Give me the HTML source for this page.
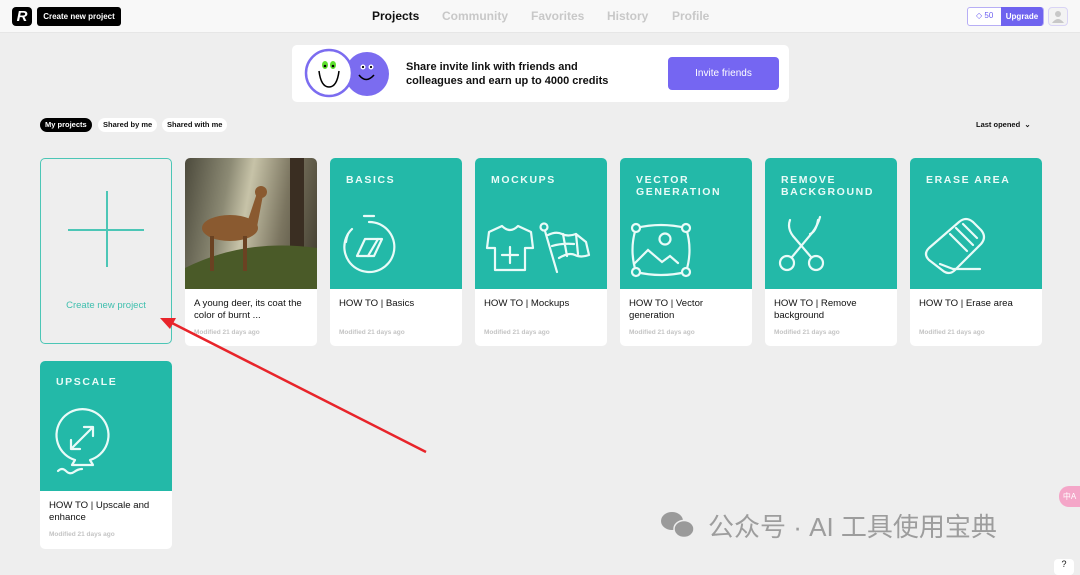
<!DOCTYPE html>
<html><head><meta charset="utf-8"><style>
*{box-sizing:border-box;margin:0;padding:0}
body{width:1080px;height:572px;background:#eeeeee;font-family:"Liberation Sans",Arial,sans-serif;position:relative;overflow:hidden;color:#111}
.hdr{position:absolute;left:0;top:0;width:1080px;height:33px;background:#f8f8f8;border-bottom:1px solid #e6e6e6}
.logo{position:absolute;left:12px;top:7px;width:20px;height:19px;background:#000;border-radius:4px;color:#fff;font-weight:bold;font-size:15px;line-height:19px;text-align:center;font-style:italic}
.cnp{position:absolute;left:37px;top:7px;width:84px;height:19px;background:#000;border-radius:3px;color:#fff;font-size:8px;font-weight:bold;line-height:19px;text-align:center}
.nav{position:absolute;top:9px;font-size:12px;font-weight:bold;color:#c8c8c8}
.cred{position:absolute;left:967px;top:7px;width:77px;height:19px;border:1px solid #b7aef5;border-radius:3px;background:#fff}
.cred span{position:absolute;left:8px;top:3px;font-size:8px;color:#6b5ef0}
.upg{position:absolute;right:0;top:-1px;width:42px;height:19px;background:#6f63ef;border-radius:0 3px 3px 0;color:#fff;font-size:8px;font-weight:bold;line-height:19px;text-align:center}
.av{position:absolute;left:1048px;top:7px;width:20px;height:19px;border:1px solid #d9d4f5;border-radius:4px;background:#f3f3f3}
.ban{position:absolute;left:292px;top:45px;width:497px;height:57px;background:#fff;border-radius:5px}
.ban p{position:absolute;left:114px;top:15px;font-size:11px;font-weight:bold;line-height:14px;color:#111}
.inv{position:absolute;left:376px;top:12px;width:111px;height:33px;background:#7566f2;border-radius:4px;color:#fff;font-size:10px;line-height:33px;text-align:center}
.tab{position:absolute;top:118px;height:14px;border-radius:7px;font-size:7.5px;font-weight:bold;line-height:14px;padding:0 5px;background:#fff}
.card{position:absolute;width:132px;background:#fff;border-radius:5px;overflow:hidden}
.top{height:131px;background:#23b9a8;position:relative}
.top h3{position:absolute;left:16px;top:16px;color:#e9fbf8;font-size:10.5px;letter-spacing:1.6px;line-height:12px;font-weight:bold}
.top svg{position:absolute;left:0;top:0}
.ct{padding:9px 9px 0;font-size:9.6px;line-height:11.5px;height:40px;color:#111}
.md{padding:0 9px;font-size:6.5px;color:#c4c4c4;font-weight:bold}
</style></head><body>
<div class="hdr">
<div class="logo">R</div><div class="cnp">Create new project</div>
<div class="nav" style="left:372px;color:#111">Projects</div>
<div class="nav" style="left:442px">Community</div>
<div class="nav" style="left:531px">Favorites</div>
<div class="nav" style="left:607px">History</div>
<div class="nav" style="left:672px">Profile</div>
<div class="cred"><span>◇ 50</span><div class="upg">Upgrade</div></div>
<div class="av"><svg width="18" height="17"><circle cx="9" cy="6" r="3" fill="#c8c8c8"/><path d="M3 15q6-8 12 0z" fill="#c8c8c8"/></svg></div>
</div>
<div class="ban">
<svg width="100" height="57" style="position:absolute;left:10px;top:0">
<circle cx="65" cy="29" r="22" fill="#7b6cf0"/>
<circle cx="27" cy="28" r="23" fill="#fff" stroke="#7b6cf0" stroke-width="2.5"/>
<ellipse cx="23" cy="20" rx="3" ry="4" fill="#5de02d"/><ellipse cx="31" cy="20" rx="3" ry="4" fill="#5de02d"/>
<circle cx="23" cy="21" r="1.3" fill="#000"/><circle cx="31" cy="21" r="1.3" fill="#000"/>
<path d="M17 26q2 16 10 16t10-16" fill="none" stroke="#000" stroke-width="1.5"/>
<circle cx="61" cy="22" r="2.5" fill="#fff"/><circle cx="69" cy="22" r="2.5" fill="#fff"/>
<circle cx="61" cy="22" r="1.1" fill="#000"/><circle cx="69" cy="22" r="1.1" fill="#000"/>
<path d="M57 30q7 9 15 0" fill="none" stroke="#000" stroke-width="1.5"/>
</svg>
<p>Share invite link with friends and<br>colleagues and earn up to 4000 credits</p>
<div class="inv">Invite friends</div>
</div>
<div class="tab" style="left:40px;background:#000;color:#fff">My projects</div>
<div class="tab" style="left:98px">Shared by me</div>
<div class="tab" style="left:162px">Shared with me</div>
<div style="position:absolute;left:976px;top:120px;font-size:7.5px;font-weight:bold">Last opened &nbsp;⌄</div>

<div style="position:absolute;left:40px;top:158px;width:132px;height:186px;border:1.5px solid #4cc6b6;border-radius:5px">
<div style="position:absolute;left:65px;top:32px;width:1.5px;height:76px;background:#4cc6b6"></div>
<div style="position:absolute;left:27px;top:70px;width:76px;height:1.5px;background:#4cc6b6"></div>
<div style="position:absolute;left:0;width:100%;top:141px;text-align:center;color:#3fbfae;font-size:9.5px">Create new project</div>
</div>

<div class="card" style="left:185px;top:158px;height:188px">
<div class="top" style="background:linear-gradient(100deg,#4c4a3c 0%,#8c8a74 30%,#c7c3a8 45%,#7b7560 70%,#3e3a2c 100%)">
<svg width="132" height="131"><rect x="105" y="0" width="14" height="131" fill="#3a2e22"/><path d="M0 110q60-30 132-20v41H0z" fill="#4a5a28"/><ellipse cx="45" cy="70" rx="28" ry="13" fill="#8a5a30"/><path d="M62 65l10-30 6 2-6 32z" fill="#8a5a30"/><circle cx="76" cy="34" r="6" fill="#8a5a30"/><rect x="25" y="78" width="4" height="35" fill="#6a4222"/><rect x="58" y="78" width="4" height="35" fill="#6a4222"/></svg>
</div>
<div class="ct">A young deer, its coat the color of burnt ...</div><div class="md">Modified 21 days ago</div></div>

<div class="card" style="left:330px;top:158px;height:188px"><div class="top"><h3>BASICS</h3>
<svg width="132" height="131" fill="none" stroke="#e9fbf8" stroke-width="2.2" stroke-linecap="round" stroke-linejoin="round"><path d="M34 58h10"/><path d="M22 71A25 25 0 1 0 39 64"/><path d="M16 84A25 25 0 0 1 18 76"/><path d="M27 98l8-17h17l-8 17z"/><path d="M38 98l10-17"/></svg></div>
<div class="ct">HOW TO | Basics</div><div class="md">Modified 21 days ago</div></div>

<div class="card" style="left:475px;top:158px;height:188px"><div class="top"><h3>MOCKUPS</h3>
<svg width="132" height="131" fill="none" stroke="#e9fbf8" stroke-width="2.2" stroke-linejoin="round" stroke-linecap="round"><path d="M14 74l13-6q8 8 16 0l13 6 2 16-8 0v22H20V90l-8 0z"/><path d="M27 97h16M35 89v16"/><circle cx="69" cy="69" r="3.5"/><path d="M70 73l12 41"/><path d="M73 77q8-4 14-1t14 0l10 8 3 13q-8 3-14 0t-16 3"/><path d="M88 76l4 22M101 76l2 20M77 88q10-3 22-2"/></svg></div>
<div class="ct">HOW TO | Mockups</div><div class="md">Modified 21 days ago</div></div>

<div class="card" style="left:620px;top:158px;height:188px"><div class="top"><h3>VECTOR<br>GENERATION</h3>
<svg width="132" height="131" fill="none" stroke="#e9fbf8" stroke-width="2.2" stroke-linecap="round"><path d="M16 70q25-6 50 0q7 22 0 44q-25 6-50 0q-7-22 0-44z"/><circle cx="16" cy="70" r="4" fill="#23b9a8"/><circle cx="66" cy="70" r="4" fill="#23b9a8"/><circle cx="16" cy="114" r="4" fill="#23b9a8"/><circle cx="66" cy="114" r="4" fill="#23b9a8"/><circle cx="45" cy="81" r="5.5"/><path d="M14 106l14-14 14 12 8-6 8 7"/></svg></div>
<div class="ct">HOW TO | Vector generation</div><div class="md">Modified 21 days ago</div></div>

<div class="card" style="left:765px;top:158px;height:188px"><div class="top"><h3>REMOVE<br>BACKGROUND</h3>
<svg width="132" height="131" fill="none" stroke="#e9fbf8" stroke-width="2.2" stroke-linecap="round"><circle cx="22" cy="105" r="7"/><circle cx="51" cy="105" r="7"/><path d="M27 99l20-24q6-8 8-16"/><path d="M46 99L28 78q-6-8-3-16"/><path d="M45 76q6-2 8-14"/></svg></div>
<div class="ct">HOW TO | Remove background</div><div class="md">Modified 21 days ago</div></div>

<div class="card" style="left:910px;top:158px;height:188px"><div class="top"><h3>ERASE AREA</h3>
<svg width="132" height="131" fill="none" stroke="#e9fbf8" stroke-width="2.2" stroke-linecap="round" stroke-linejoin="round"><path d="M19 90l30-26q7-6 14 0l8 8q6 7 0 14l-26 26q-6 6-13 0l-13-10q-6-6 0-12z"/><path d="M40 76l17 17M46 70l17 17M53 66l14 14M30 106l13 5M43 111h27"/></svg></div>
<div class="ct">HOW TO | Erase area</div><div class="md">Modified 21 days ago</div></div>

<div class="card" style="left:40px;top:361px;height:188px"><div class="top" style="height:130px"><h3 style="top:15px">UPSCALE</h3>
<svg width="132" height="131" fill="none" stroke="#e9fbf8" stroke-width="2.2" stroke-linecap="round" stroke-linejoin="round"><path d="M35 99A26 26 0 1 1 50 99l3 5H32z"/><path d="M31 88l22-22M31 88v-9M31 88h9M53 66h-9M53 66v9"/><path d="M18 110q4-4 8 0t8 1 8-3"/></svg></div>
<div class="ct">HOW TO | Upscale and enhance</div><div class="md">Modified 21 days ago</div></div>

<svg width="1080" height="572" style="position:absolute;left:0;top:0"><path d="M426 452L170 322" stroke="#e8242a" stroke-width="2.5"/><path d="M160 318l16 0-6 11z" fill="#e8242a"/></svg>

<div style="position:absolute;left:658px;top:508px;width:42px;height:34px"><svg width="42" height="34"><ellipse cx="14" cy="13" rx="11" ry="9" fill="#9a9a9a"/><ellipse cx="26" cy="21" rx="10" ry="8.5" fill="#9a9a9a" stroke="#eee" stroke-width="1.5"/></svg></div>
<div style="position:absolute;left:708px;top:510px;font-size:26px;color:#9d9d9d;font-family:'Liberation Sans','Noto Sans CJK SC',sans-serif;line-height:34px">公众号 · AI 工具使用宝典</div>
<div style="position:absolute;left:1059px;top:486px;width:21px;height:21px;background:#f4a6c8;border-radius:10px 0 0 10px;color:#fff;font-size:8px;line-height:21px;text-align:center">中A</div>
<div style="position:absolute;left:1054px;top:559px;width:20px;height:16px;background:#fff;border-radius:4px;font-size:9px;text-align:center">?</div>
</body></html>
